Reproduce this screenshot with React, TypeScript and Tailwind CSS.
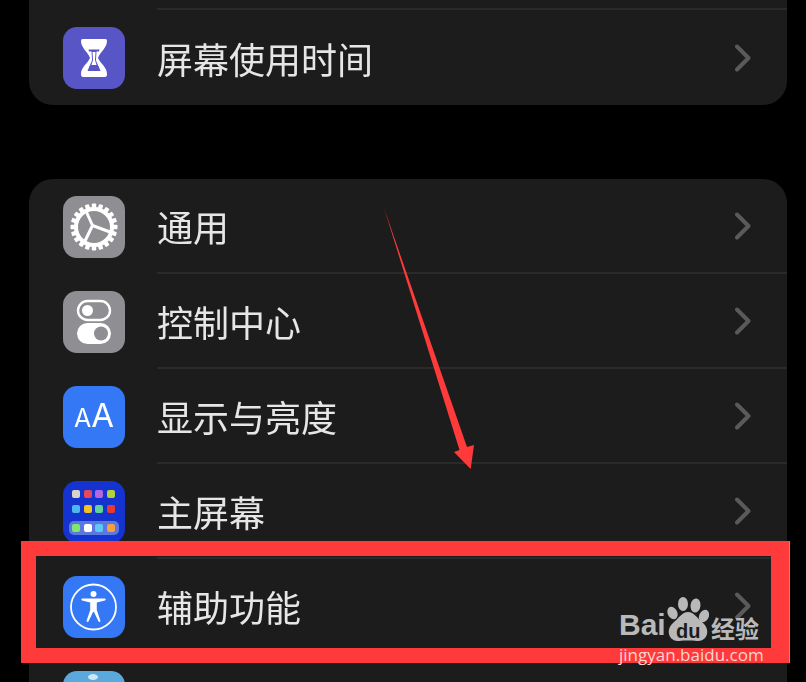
import React from "react";

const Hourglass = () => (
  <svg viewBox="0 0 62 62" className="w-full h-full">
    <path
      fill="#fff"
      d="M19.5 12 H42.5 Q44 12 44 14 C44 21 37 25 35 31 C37 36 44 40 44 47 Q44 50 42 50 H20 Q18 50 18 47 C18 40 25 36 27 31 C25 25 18 21 18 14 Q18 12 19.5 12 Z"
    />
    <path fill="#5856c6" d="M25.5 22.5 H36.5 L36 24.5 H33.5 L33 33 C33.5 36 35 37 35.5 40 H26.5 C27 37 28.5 36 29 33 L28.5 24.5 H26 Z" />
    <path fill="#fff" d="M29.5 25 H32.5 L32 33 C32.5 35 33 36 33.5 38 H28.5 C29 36 29.5 35 30 33 Z" />
    <path fill="#5856c6" d="M26.5 39 H35.5 L37.5 44 H24.5 Z" />
  </svg>
);

const Gear = () => {
  const teeth = Array.from({ length: 20 }, (_, i) => (i * 360) / 20);
  return (
    <svg viewBox="0 0 62 62" className="w-full h-full">
      {teeth.map((a) => (
        <rect key={a} x="28.8" y="7.5" width="4.4" height="6" rx="0.8" fill="#fff" transform={`rotate(${a} 31 31)`} />
      ))}
      <circle cx="31" cy="31" r="18" fill="none" stroke="#fff" strokeWidth="4" />
      <path d="M29.5 29.5 L23 15 M29.5 29.5 L47 36 M29.5 29.5 L22 45" stroke="#fff" strokeWidth="3" fill="none" />
    </svg>
  );
};

const Switches = () => (
  <svg viewBox="0 0 62 62" className="w-full h-full">
    <rect x="15" y="10" width="32" height="19" rx="9.5" fill="none" stroke="#fff" strokeWidth="2.4" />
    <circle cx="24.5" cy="19.5" r="5.5" fill="#fff" />
    <rect x="14" y="32" width="34" height="21" rx="10.5" fill="#fff" />
    <circle cx="38" cy="42.5" r="7" fill="#8e8e93" />
  </svg>
);

const HomeGrid = () => {
  const xs = [13, 25, 36, 48];
  const r1 = ["#d8d4c8", "#e8475a", "#b266e0", "#b6d03c"];
  const r2 = ["#4bb8f0", "#f2c21f", "#5fd39a", "#e63a30"];
  const r3 = ["#7fe86a", "#ffffff", "#5cc8f5", "#f5a040"];
  return (
    <svg viewBox="0 0 62 62" className="w-full h-full">
      <rect x="6" y="40" width="50" height="14" rx="5" fill="#5b78e0" />
      {xs.map((x, i) => (
        <React.Fragment key={x}>
          <rect x={x - 4} y={9} width="8" height="8" rx="2" fill={r1[i]} />
          <rect x={x - 4} y={24} width="8" height="8" rx="2" fill={r2[i]} />
          <rect x={x - 4} y={43} width="8" height="8" rx="2" fill={r3[i]} />
        </React.Fragment>
      ))}
    </svg>
  );
};

const AccessIcon = () => (
  <svg viewBox="0 0 62 62" className="w-full h-full">
    <circle cx="30.5" cy="31" r="22.5" fill="none" stroke="#fff" strokeWidth="1.8" />
    <circle cx="30.5" cy="18" r="3" fill="#fff" />
    <path
      fill="#fff"
      d="M19 22.5 L42 22.5 Q43.5 23.3 42 24.5 L33.8 26.5 L33.8 34 L37.5 45 Q37 46.5 35.5 45.5 L31 36 L30 36 L25.5 45.5 Q24 46.5 23.5 45 L27.2 34 L27.2 26.5 L19 24.5 Q17.5 23.3 19 22.5 Z"
    />
  </svg>
);

const Chevron = () => (
  <svg width="16" height="28" viewBox="0 0 16 28" className="shrink-0">
    <path d="M2 2.5 L13.5 14 L2 25.5" fill="none" stroke="#5a5a5c" strokeWidth="4" strokeLinecap="round" strokeLinejoin="round" />
  </svg>
);

type RowProps = { icon: React.ReactNode; bg: string; label: string; last?: boolean };

const Row = ({ icon, bg, label, last }: RowProps) => (
  <div className="flex h-[95px] items-center pl-[34px]">
    <div className={`h-[62px] w-[62px] shrink-0 overflow-hidden rounded-[14px] ${bg}`}>{icon}</div>
    <div className={`ml-[32px] flex h-full flex-1 items-center justify-between pr-[36px] ${last ? "" : "border-b-2 border-[#2a2a2a]"}`}>
      <span className="text-[36px] leading-none text-[#e6e6e6]">{label}</span>
      <Chevron />
    </div>
  </div>
);

const Watermark = () => (
  <div className="absolute left-[619px] top-[595px] flex w-[146px] flex-col">
    <div className="flex h-[47px] items-end gap-[2px]">
      <span
        className="w-[46px] whitespace-nowrap pb-[1px] text-[30px] font-bold leading-[32px] text-[#b9b9b9]"
        style={{ fontFamily: '"Liberation Sans", sans-serif' }}
      >
        Bai
      </span>
      <div className="relative h-[47px] w-[42px] shrink-0">
        <svg width="42" height="47" viewBox="0 0 42 47" className="block">
          <g fill="#b9b9b9">
            <ellipse cx="16" cy="9" rx="5" ry="7" />
            <ellipse cx="28.5" cy="10.5" rx="5" ry="7" transform="rotate(8 28.5 10.5)" />
            <ellipse cx="5.5" cy="18" rx="4.8" ry="6.5" transform="rotate(-25 5.5 18)" />
            <ellipse cx="37" cy="21" rx="4.8" ry="6.5" transform="rotate(25 37 21)" />
            <path d="M21 17 C27 17 30 23 36 28 C44 35 40 47 30 46 C24 45.4 18 45.4 12 46 C2 47 -2 35 6 28 C12 23 15 17 21 17 Z" />
          </g>
        </svg>
        <span
          className="absolute left-[9px] top-[26px] text-[20px] font-bold leading-[20px] text-[#1c1c1c]"
          style={{ fontFamily: '"Liberation Sans", sans-serif' }}
        >
          du
        </span>
      </div>
      <span className="whitespace-nowrap text-[24px] font-bold leading-[28px] text-[#b9b9b9]">经验</span>
    </div>
    <span
      className="mt-[3px] whitespace-nowrap text-[17px] leading-[20px] text-[#ffd4d4]"
      style={{ fontFamily: '"Open Sans", sans-serif' }}
    >
      jingyan.baidu.com
    </span>
  </div>
);

export default function App() {
  return (
    <div
      className="relative h-[682px] w-[806px] overflow-hidden bg-black"
      style={{ fontFamily: '"Noto Sans CJK SC", "Liberation Sans", sans-serif' }}
    >
      <div className="ml-[29px] mr-[19px] blur-[0.6px]">
        <div className="overflow-hidden rounded-b-[24px] bg-[#1c1c1c]">
          <div className="ml-[128px] h-[10px] border-b-2 border-[#2a2a2a]" />
          <Row icon={<Hourglass />} bg="bg-[#5856c6]" label="屏幕使用时间" last />
        </div>
        <div className="mt-[74px] overflow-hidden rounded-t-[24px] bg-[#1c1c1c]">
          <Row icon={<Gear />} bg="bg-[#8e8e93]" label="通用" />
          <Row icon={<Switches />} bg="bg-[#8e8e93]" label="控制中心" />
          <Row
            icon={
              <div className="flex h-full w-full items-baseline justify-center pt-[9px] font-['Inter'] font-normal text-white">
                <span className="text-[25px] leading-[40px]">A</span>
                <span className="text-[33px] leading-[40px]">A</span>
              </div>
            }
            bg="bg-[#3478f6]"
            label="显示与亮度"
          />
          <Row icon={<HomeGrid />} bg="bg-[#1534cf]" label="主屏幕" />
          <Row icon={<AccessIcon />} bg="bg-[#3478f6]" label="辅助功能" />
          <Row
            icon={
              <svg viewBox="0 0 62 62" className="h-full w-full">
                <ellipse cx="30" cy="6" rx="5" ry="3" fill="#cfe6f5" />
              </svg>
            }
            bg="bg-[#5aa9dc]"
            label=""
            last
          />
        </div>
      </div>

      {/* red annotation box */}
      <div className="absolute left-[21px] top-[541px] h-[122px] w-[768px] border-[15px] border-r-[18px] border-[#fe3a3a] shadow-[1px_0_0_#f06a90]" />

      {/* red annotation arrow */}
      <svg className="absolute left-0 top-0" width="806" height="682" viewBox="0 0 806 682">
        <polygon points="384,208 467,447 474,445 470.7,469 454,452 459.5,450" fill="#fe3a3a" />
      </svg>

      <Watermark />
    </div>
  );
}
